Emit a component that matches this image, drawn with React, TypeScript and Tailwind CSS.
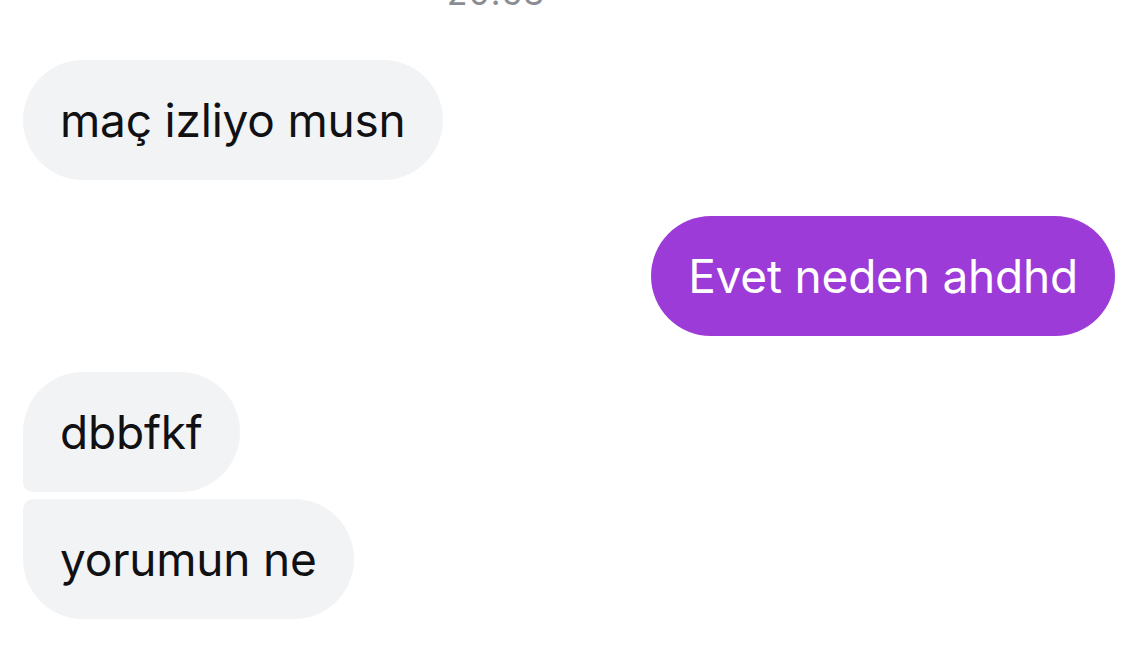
import React from "react";

type Msg = {
  id: number;
  text: string;
  mine: boolean;
  shape: string;
};

const messages: Msg[] = [
  { id: 1, text: "maç izliyo musn", mine: false, shape: "rounded-[60px] mb-[36px]" },
  { id: 2, text: "Evet neden ahdhd", mine: true, shape: "rounded-[60px] mb-[36px]" },
  { id: 3, text: "dbbfkf", mine: false, shape: "rounded-[60px] rounded-bl-[10px] mb-[7px]" },
  { id: 4, text: "yorumun ne", mine: false, shape: "rounded-[60px] rounded-tl-[10px]" },
];

const Bubble = ({ msg }: { msg: Msg }) => {
  return (
    <div className={`flex w-full ${msg.mine ? "justify-end" : "justify-start"}`}>
      <div
        className={`h-[120px] px-[37px] flex items-center text-[46px] leading-none tracking-[-0.2px] ${msg.shape} ${
          msg.mine ? "bg-[#9c3bd8] text-white" : "bg-[#f2f3f5] text-[#111114]"
        }`}
      >
        {msg.text}
      </div>
    </div>
  );
};

export default function App() {
  return (
    <div
      className="w-[1139px] h-[647px] bg-white overflow-hidden"
      style={{ fontFamily: "Inter, 'Noto Sans', sans-serif" }}
    >
      <div className="flex justify-center h-[60px] items-start pr-[147px]">
        <span className="-mt-[24px] text-[34px] leading-none text-[#8a8d93] tracking-[1px]">20:53</span>
      </div>
      <div className="flex flex-col pl-[23px] pr-[24px]">
        {messages.map((m) => (
          <Bubble key={m.id} msg={m} />
        ))}
      </div>
    </div>
  );
}
